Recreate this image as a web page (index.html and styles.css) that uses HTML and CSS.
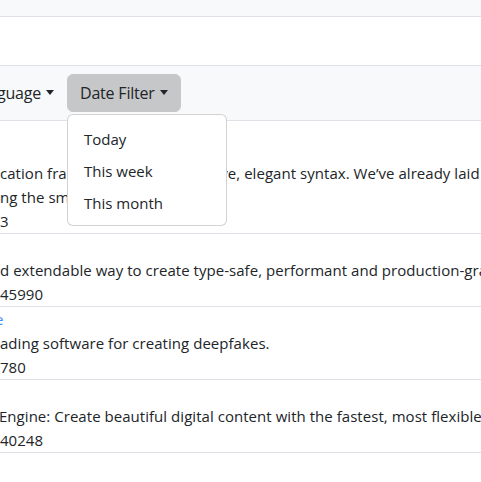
FILE: index.html
```html
<!DOCTYPE html>
<html lang="en">
<head>
<meta charset="utf-8">
<title>Trending</title>
<link rel="stylesheet" href="styles.css">
</head>
<body>
<div class="topbar"></div>
<div class="header"></div>
<div class="filters">
  <div class="lang-cell">
    <button class="btn btn-lang" type="button">Language<span class="caret"></span></button>
  </div>
  <div class="dropdown">
    <button class="btn btn-date" type="button">Date Filter<span class="caret"></span></button>
    <ul class="menu">
      <li class="menu-item">Today</li>
      <li class="menu-item">This week</li>
      <li class="menu-item">This month</li>
    </ul>
  </div>
</div>
<ul class="repos">
  <li class="repo">
    <div class="line link"></div>
    <div class="line">cation framework with expressive, elegant syntax. We’ve already laid the foundation</div>
    <div class="line">ng the small things.</div>
    <div class="line">3</div>
  </li>
  <li class="repo">
    <div class="line link"></div>
    <div class="line">d extendable way to create type-safe, performant and production-grade applications</div>
    <div class="line">45990</div>
  </li>
  <li class="repo">
    <div class="line link"><span class="link-tail">e</span></div>
    <div class="line">ading software for creating deepfakes.</div>
    <div class="line">780</div>
  </li>
  <li class="repo">
    <div class="line link"></div>
    <div class="line cut">Engine: Create beautiful digital content with the fastest, most flexible tools</div>
    <div class="line">40248</div>
  </li>
</ul>
</body>
</html>
```

FILE: styles.css
```css
* { box-sizing: border-box; }
html, body { margin: 0; padding: 0; }
body {
  font-family: "Open Sans", "Noto Sans", sans-serif;
  font-size: 15px;
  letter-spacing: 0.04px;
  line-height: 24px;
  color: #212529;
  background: #fff;
  overflow: hidden;
  width: 481px;
}
.topbar {
  height: 17px;
  background: #f8f9fa;
  border-bottom: 1px solid #dee2e6;
}
.header {
  height: 49px;
  border-bottom: 1px solid #dee2e6;
}
.filters {
  display: grid;
  grid-template-columns: 67px auto 1fr;
  background: #f8f9fa;
  padding: 8px 0;
  border-bottom: 1px solid #dee2e6;
  height: 55px;
}
.lang-cell {
  display: flex;
  justify-content: flex-end;
  overflow: visible;
  min-width: 0;
}
.btn {
  font: inherit;
  font-size: 16px;
  letter-spacing: -0.2px;
  color: #212529;
  border: 1px solid transparent;
  border-radius: 6px;
  padding: 6px 12px;
  line-height: 24px;
  height: 38px;
  background: transparent;
  white-space: nowrap;
  display: inline-flex;
  align-items: center;
  flex-shrink: 0;
}
.btn-date {
  background: #c6c7c8;
  border-color: #c6c7c8;
}
.caret {
  display: inline-block;
  margin-left: 5px;
  width: 0;
  height: 0;
  border-top: 5px solid #212529;
  border-left: 4px solid transparent;
  border-right: 4px solid transparent;
  position: relative;
  top: -1px;
}
.dropdown {
  position: relative;
}
.menu {
  position: absolute;
  left: 0;
  top: 40px;
  width: 160px;
  margin: 0;
  padding: 8px 0 6px;
  list-style: none;
  background: #fff;
  border: 1px solid rgba(0, 0, 0, 0.175);
  border-radius: 6px;
  z-index: 5;
  letter-spacing: 0;
}
.menu-item {
  padding: 4px 16px;
  line-height: 24px;
  white-space: nowrap;
}
.repos {
  list-style: none;
  margin: 16px 0 0;
  padding: 0;
}
.repo {
  border-bottom: 1px solid #dee2e6;
}
.line {
  height: 24px;
  white-space: nowrap;
  overflow: hidden;
}
.link-tail {
  display: inline-block;
  color: #3d8bfd;
  margin-left: -5px;
}
.cut {
  margin-left: -1px;
}
```
